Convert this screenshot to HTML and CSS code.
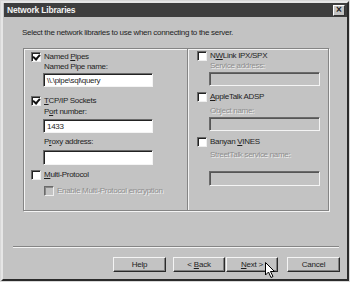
FILE: index.html
```html
<html>
<head>
<link rel="stylesheet" href="styles.css">
</head>
<body>
<div class="win">
  <div class="titlebar">
    <span class="title">Network Libraries</span>
    <span class="closebtn">&times;</span>
  </div>

  <div class="content">
    <div class="intro">Select the network libraries to use when connecting to the server.</div>

    <div class="frame">
      <div class="col left">
        <div class="chk r1"><span class="box on"></span><span>Named <u>P</u>ipes</span></div>
        <div class="lbl">Named Pipe name:</div>
        <div class="field w1 f1">\\.\pipe\sql\query</div>

        <div class="chk r2"><span class="box on"></span><span><u>T</u>CP/IP Sockets</span></div>
        <div class="lbl l2">P<u>o</u>rt number:</div>
        <div class="field w1 f2">1433</div>
        <div class="lbl l3">P<u>r</u>oxy address:</div>
        <div class="field w1 f3"></div>

        <div class="chk r3"><span class="box"></span><span><u>M</u>ulti-Protocol</span></div>
        <div class="chk sub r4"><span class="box off"></span><span class="dim">Enable Multi-Protocol encryption</span></div>
      </div>

      <div class="col right">
        <div class="chk r1b"><span class="box"></span><span>N<u>W</u>Link IPX/SPX</span></div>
        <div class="lbl dim">Service address:</div>
        <div class="field w2 off f1b"></div>

        <div class="chk r2b"><span class="box"></span><span><u>A</u>ppleTalk ADSP</span></div>
        <div class="lbl dim l2b">Object name:</div>
        <div class="field w2 off"></div>

        <div class="chk r3b"><span class="box"></span><span>Banyan <u>V</u>INES</span></div>
        <div class="lbl dim l3b">StreetTalk service name:</div>
        <div class="field w2 off f3b"></div>
      </div>
    </div>

    <div class="sep"></div>

    <div class="buttons">
      <button class="btn help">Help</button>
      <button class="btn">&lt; <u>B</u>ack</button>
      <button class="btn next"><u>N</u>ext &gt;</button>
      <button class="btn cancel">Cancel</button>
    </div>
  </div>

  <svg class="cursor" width="11" height="17" viewBox="0 0 11 17">
    <path d="M0.5 0.5 L0.5 13 L3.5 10 L6 15.5 L8 14.5 L5.5 9.5 L9.5 9.5 Z" fill="#fff" stroke="#000" stroke-width="1"/>
  </svg>
</div>
</body>
</html>
```

FILE: styles.css
```css
* {font-family: "Liberation Sans", Arial, sans-serif;}
body {margin: 0; background: #d8d8d8;}

.win {
  position: relative;
  margin: 1px;
  width: 348px; height: 280px;
  box-sizing: border-box;
  background: #c3c3c3;
  border: 2px solid;
  border-color: #e6e6e6 #2a2a2a #2a2a2a #e6e6e6;
  color: #1e1e1e;
  font-size: 8px;
  letter-spacing: -0.3px;
}

.titlebar {
  height: 14px;
  margin: 0 0 0 1px;
  background: #3e3e3e;
  display: flex; align-items: center; justify-content: space-between;
  padding: 0 2px 0 3px;
}
.title {color: #f2f2f2; font-weight: bold; font-size: 8.5px; letter-spacing: -0.2px;}
.closebtn {
  width: 10px; height: 9px; line-height: 8px;
  background: #c3c3c3; color: #222;
  text-align: center; font-size: 10px; font-weight: bold; letter-spacing: 0;
  border: 1px solid; border-color: #fff #333 #333 #fff;
}

.content {padding: 0 8px 0 10px;}
.intro {margin: 10px 0 0 9px; line-height: 11px;}

.frame {
  margin: 10px 0 0 10px;
  width: 306px; height: 163px;
  box-sizing: border-box;
  border: 1px solid #858585;
  box-shadow: 1px 1px 0 #f4f4f4, inset 1px 1px 0 #f4f4f4;
  display: grid;
  grid-template-columns: 164px 1fr;
}
.col {line-height: 10px;}
.left {padding: 3px 0 0 7px; border-right: 1px solid #858585;}
.right {padding: 2px 0 0 8px; border-left: 1px solid #f4f4f4;}

.chk {display: flex; align-items: center; gap: 3px; height: 10px;}
.box {
  width: 8px; height: 8px;
  background: #fff;
  border: 1px solid; border-color: #6a6a6a #eee #eee #6a6a6a;
  box-shadow: inset 1px 1px 0 #222;
  position: relative;
}
.box.on::after {
  content: ""; position: absolute;
  left: 2px; top: 0px; width: 3px; height: 5px;
  border: solid #111; border-width: 0 2px 2px 0;
  transform: rotate(40deg);
}
.box.off {background: #c3c3c3; box-shadow: inset 1px 1px 0 #888;}
.sub {margin-left: 13px;}
.lbl {margin-left: 13px;}
.dim {color: #8e8e8e; text-shadow: 1px 1px 0 #f0f0f0;}

.field {
  height: 14px; margin-top: 1px; margin-left: 12px;
  box-sizing: border-box;
  background: #fff;
  border: 1px solid; border-color: #6a6a6a #f4f4f4 #f4f4f4 #6a6a6a;
  box-shadow: inset 1px 1px 0 #222;
  padding: 2px 0 0 3px;
  line-height: 10px;
}
.field.off {background: #c3c3c3; box-shadow: inset 1px 1px 0 #555;}
.w1 {width: 110px;}
.w2 {width: 111px;}

.r2 {margin-top: 9px;}
.l2 {margin-top: 1px;}
.f2 {margin-top: 2px;}
.l3 {margin-top: 4px;}
.f3 {margin-top: 3px; height: 15px;}
.r3 {margin-top: 5px;}
.r4 {margin-top: 6px;}

.r2b {margin-top: 6px;}
.l2b {margin-top: 4px;}
.r3b {margin-top: 6px;}
.l3b {margin-top: 3px;}
.f3b {margin-top: 11px; height: 15px;}

.sep {
  margin-top: 35px;
  border-top: 1px solid #858585;
  border-bottom: 1px solid #f4f4f4;
}

.buttons {display: flex; justify-content: flex-end; margin: 9px -1px 0 0;}
.btn {
  height: 15px; width: 52px; padding: 0;
  background: #c3c3c3; color: #1e1e1e;
  font-size: 8px; letter-spacing: -0.2px;
  border: 1px solid; border-color: #f4f4f4 #2a2a2a #2a2a2a #f4f4f4;
  box-shadow: inset -1px -1px 0 #808080;
}
.help {width: 53px; margin-right: 7px;}
.next {margin-left: 1px;}
.cancel {width: 53px; margin-left: 9px;}

.cursor {position: absolute; left: 262px; top: 259px;}
```
